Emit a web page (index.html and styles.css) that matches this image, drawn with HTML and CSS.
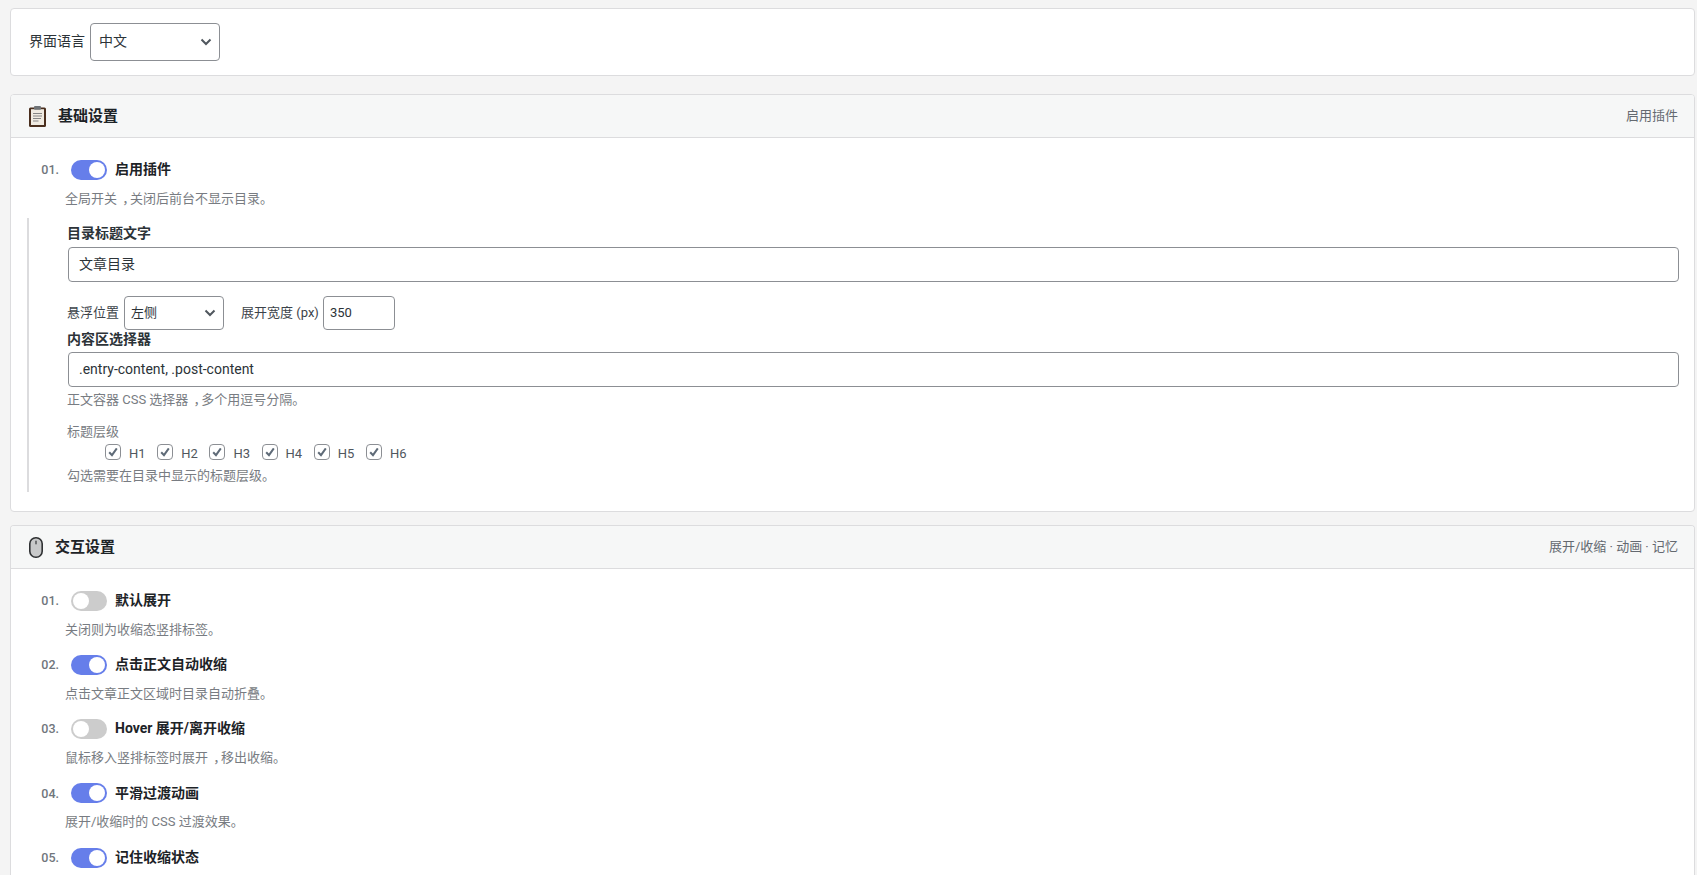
FILE: index.html
```html
<!DOCTYPE html>
<html lang="zh">
<head>
<meta charset="utf-8">
<title>设置</title>
<link rel="stylesheet" href="styles.css">
</head>
<body>
<div class="card lang">
  <label class="lang-label">界面语言</label>
  <div class="select select-lang"><span>中文</span><svg class="chev" viewBox="0 0 12 8"><path d="M1.5 1.5 6 6l4.5-4.5"/></svg></div>
</div>

<section class="card panel">
  <header class="head">
    <svg class="ico" width="17" height="21" viewBox="0 0 17 21"><rect x="0" y="1.5" width="17" height="19.5" rx="1.5" fill="#4a2f1e"/><rect x="2" y="3.2" width="13" height="15.8" fill="#f0ebe2"/><rect x="5" y="0" width="7" height="3.8" rx="1" fill="#6f7377"/><path d="M4 7.5h9M4 10h9M4 12.5h8M4 15h5.5" stroke="#858585" stroke-width="1.2"/></svg>
    <h2 class="title">基础设置</h2>
    <span class="hint">启用插件</span>
  </header>
  <div class="body body-basic">
    <div class="row"><span class="num">01.</span><span class="tog on"></span><span class="name">启用插件</span></div>
    <p class="desc">全局开关<span class="cm">，</span>关闭后前台不显示目录。</p>
    <div class="sub">
      <label class="flabel">目录标题文字</label>
      <div class="input full">文章目录</div>
      <div class="inline">
        <span>悬浮位置</span>
        <div class="select select-pos"><span>左侧</span><svg class="chev" viewBox="0 0 12 8"><path d="M1.5 1.5 6 6l4.5-4.5"/></svg></div>
        <span class="w-label">展开宽度 (px)</span>
        <div class="input num-in">350</div>
      </div>
      <label class="flabel">内容区选择器</label>
      <div class="input full tight">.entry-content, .post-content</div>
      <p class="note">正文容器 CSS 选择器<span class="cm">，</span>多个用逗号分隔。</p>
      <div class="levels-title">标题层级</div>
      <div class="levels">
        <span class="chk"><svg class="box" viewBox="0 0 14 14"><path d="M3.2 7.2 6 10.2 10.8 3.4"/></svg><span class="chk-t">H1</span></span>
        <span class="chk"><svg class="box" viewBox="0 0 14 14"><path d="M3.2 7.2 6 10.2 10.8 3.4"/></svg><span class="chk-t">H2</span></span>
        <span class="chk"><svg class="box" viewBox="0 0 14 14"><path d="M3.2 7.2 6 10.2 10.8 3.4"/></svg><span class="chk-t">H3</span></span>
        <span class="chk"><svg class="box" viewBox="0 0 14 14"><path d="M3.2 7.2 6 10.2 10.8 3.4"/></svg><span class="chk-t">H4</span></span>
        <span class="chk"><svg class="box" viewBox="0 0 14 14"><path d="M3.2 7.2 6 10.2 10.8 3.4"/></svg><span class="chk-t">H5</span></span>
        <span class="chk"><svg class="box" viewBox="0 0 14 14"><path d="M3.2 7.2 6 10.2 10.8 3.4"/></svg><span class="chk-t">H6</span></span>
      </div>
      <p class="note n2">勾选需要在目录中显示的标题层级。</p>
    </div>
  </div>
</section>

<section class="card panel panel-last">
  <header class="head">
    <svg class="ico" width="14" height="21" viewBox="0 0 14 21"><rect x=".8" y=".8" width="12.4" height="19.4" rx="6" fill="#c8c9ca" stroke="#2f3133" stroke-width="1.6"/><rect x="6.2" y="3.6" width="1.6" height="4" rx=".8" fill="#5a5c5e"/></svg>
    <h2 class="title">交互设置</h2>
    <span class="hint">展开/收缩 · 动画 · 记忆</span>
  </header>
  <div class="body">
    <div class="item">
      <div class="row"><span class="num">01.</span><span class="tog"></span><span class="name">默认展开</span></div>
      <p class="desc">关闭则为收缩态竖排标签。</p>
    </div>
    <div class="item">
      <div class="row"><span class="num">02.</span><span class="tog on"></span><span class="name">点击正文自动收缩</span></div>
      <p class="desc">点击文章正文区域时目录自动折叠。</p>
    </div>
    <div class="item">
      <div class="row"><span class="num">03.</span><span class="tog"></span><span class="name">Hover 展开/离开收缩</span></div>
      <p class="desc">鼠标移入竖排标签时展开<span class="cm">，</span>移出收缩。</p>
    </div>
    <div class="item">
      <div class="row"><span class="num">04.</span><span class="tog on"></span><span class="name">平滑过渡动画</span></div>
      <p class="desc">展开/收缩时的 CSS 过渡效果。</p>
    </div>
    <div class="item">
      <div class="row"><span class="num">05.</span><span class="tog on"></span><span class="name">记住收缩状态</span></div>
    </div>
  </div>
</section>
</body>
</html>
```
FILE: styles.css
```css
* { box-sizing: border-box; }
html, body { height: 875px; overflow: hidden; }
body {
  margin: 0;
  padding: 8px 2px 0 10px;
  background: #f4f4f4;
  color: #3c434a;
  font: 13px/1.4 Roboto, "Noto Sans CJK SC", sans-serif;
}
p, h2 { margin: 0; }
.card {
  background: #fff;
  border: 1px solid #dcdcde;
  border-radius: 4px;
}
.lang {
  height: 68px;
  display: flex;
  align-items: center;
  gap: 5px;
  padding-left: 18px;
  font-size: 14px;
}
.lang-label { color: #2c3338; }
.select {
  display: flex;
  align-items: center;
  justify-content: space-between;
  background: #fff;
  border: 1px solid #8c8f94;
  border-radius: 4px;
  color: #2c3338;
}
.select-lang { width: 130px; height: 38px; padding: 0 7px 0 8px; }
.select-pos { width: 100px; height: 34px; padding: 0 7px 0 6px; }
.chev { width: 12px; height: 8px; fill: none; stroke: #50575e; stroke-width: 2; }
.panel { margin-top: 18px; height: 418px; overflow: hidden; }
.panel-last { margin-top: 13px; height: 350px; border-radius: 4px 4px 0 0; border-bottom: 0; }
.head {
  height: 43px;
  display: flex;
  align-items: center;
  padding: 0 16px 0 18px;
  background: #f6f7f7;
  border-bottom: 1px solid #dcdcde;
}
.ico { flex: none; }
.title {
  margin-left: 12px;
  font-size: 15px;
  font-weight: 700;
  color: #1d2327;
}
.hint { margin-left: auto; color: #646970; }
.body { padding: 21.8px 0 0 29px; }
.row { display: flex; align-items: center; height: 20px; }
.num { width: 19px; text-align: right; font-size: 12.5px; font-weight: 500; color: #70767c; white-space: nowrap; }
.tog {
  position: relative;
  width: 36px;
  height: 20px;
  margin-left: 12px;
  border-radius: 10px;
  background: #ccc;
}
.tog::after {
  content: "";
  position: absolute;
  top: 2px;
  left: 2px;
  width: 16px;
  height: 16px;
  border-radius: 50%;
  background: #fff;
}
.tog.on { background: #667eea; }
.tog.on::after { left: 18px; }
.name { margin-left: 8px; font-size: 14px; font-weight: 700; color: #1d2327; }
.desc { margin: 10px 0 0 25px; color: #787c82; height: 18px; line-height: 18px; }
.body-basic .desc { margin-bottom: 10px; }
.cm { font-feature-settings: "halt"; padding: 0 .1em 0 .4em; }
.sub {
  margin: 0 15px 0 -13px;
  padding: 6px 0 0 38px;
  border-left: 2px solid #dcdcde;
  height: 274px;
}
.flabel { display: block; font-size: 14px; font-weight: 700; height: 18px; line-height: 18px; color: #2c3338; }
.input {
  display: flex;
  align-items: center;
  background: #fff;
  border: 1px solid #8c8f94;
  border-radius: 4px;
  color: #2c3338;
}
.full { height: 35px; margin: 5px 0 0 1px; padding: 0 10px; font-size: 14px; }
.full.tight { margin-top: 4px; }
.inline {
  display: flex;
  align-items: center;
  gap: 5px;
  margin-top: 14px;
  height: 34px;
}
.w-label { margin-left: 12px; }
.num-in { width: 72px; height: 34px; padding: 0 6px; margin-left: -1px; }
.note { margin-top: 4px; height: 18px; line-height: 18px; color: #787c82; }
.levels-title { margin-top: 14px; height: 18px; line-height: 18px; color: #787c82; }
.levels { display: flex; margin-left: 38px; height: 22px; align-items: center; }
.chk { display: flex; align-items: center; flex: none; width: 52.2px; color: #50575e; }
.chk-t { padding-top: 4px; }
.box {
  flex: none;
  width: 16px;
  height: 16px;
  margin-right: 8px;
  background: #fff;
  border: 1px solid #8c8f94;
  border-radius: 4px;
  fill: none;
  stroke: #5f6b78;
  stroke-width: 2;
}
.n2 { margin-top: 4px; }
.item { height: 64.2px; }
```
